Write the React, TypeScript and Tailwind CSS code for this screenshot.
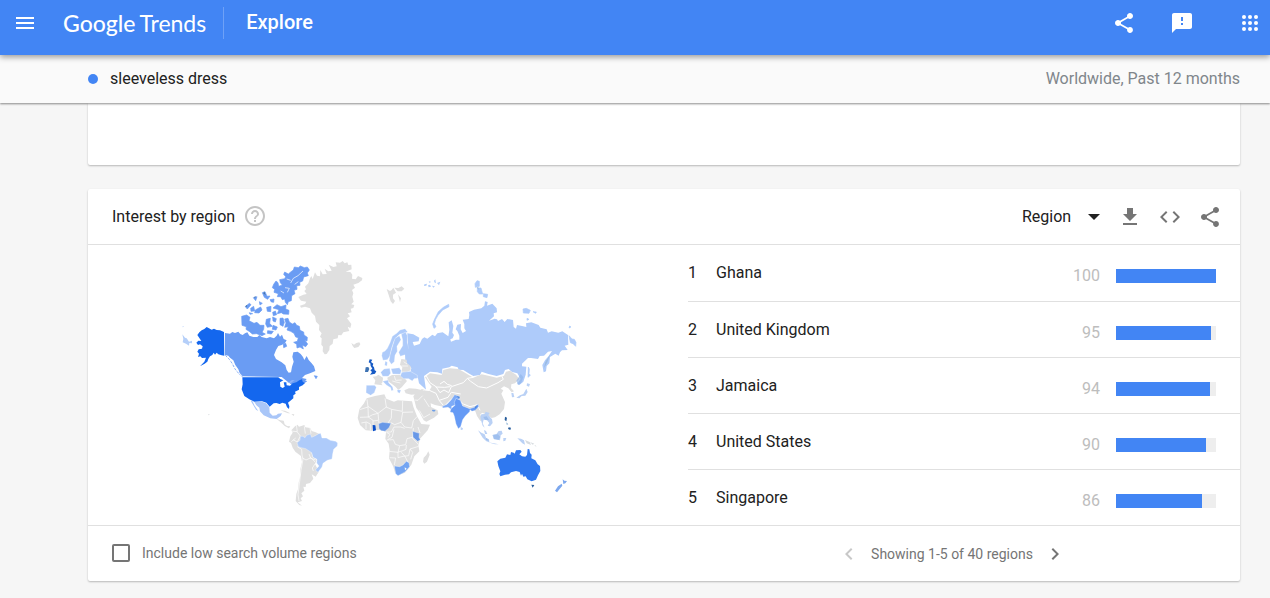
import type { ReactNode } from "react";
import {
  MdChevronLeft,
  MdChevronRight,
  MdCode,
  MdFeedback,
  MdHelpOutline,
  MdMenu,
  MdShare,
} from "react-icons/md";

const regions = [
  { name: "Ghana", value: 100 },
  { name: "United Kingdom", value: 95 },
  { name: "Jamaica", value: 94 },
  { name: "United States", value: 90 },
  { name: "Singapore", value: 86 },
];

function IconButton({
  label,
  disabled,
  children,
}: {
  label: string;
  disabled?: boolean;
  children: ReactNode;
}) {
  return (
    <button type="button" aria-label={label} disabled={disabled} className="block size-6 shrink-0">
      {children}
    </button>
  );
}

const appDots = [6, 12, 18];

function AppsIcon() {
  return (
    <svg viewBox="0 0 24 24" className="size-6" fill="currentColor" aria-hidden="true">
      {appDots.map((y) => appDots.map((x) => <circle key={`${x}-${y}`} cx={x} cy={y} r="2" />))}
    </svg>
  );
}

function DownloadIcon() {
  return (
    <svg viewBox="0 0 24 24" className="size-6" fill="currentColor" aria-hidden="true">
      <path d="M19 9h-4V3H9v6H5l7 7 7-7zM5 18v2h14v-2H5z" />
    </svg>
  );
}

function WorldMap() {
  return (
    <svg viewBox="0 0 1200 756" className="w-full max-w-[400px]" role="img" aria-label="Interest by region map">
      {/* Alaska, Canada and the Arctic islands */}
      <g transform="translate(-30 0)">
        <path fill="#1467ee" d="M162 231L163 302 155 301 145 298 140 293 135 299 131 293 127 300 120 304 115 312 112 320 104 326 90 334 103 320 108 308 96 309 91 304 84 306 87 296 82 290 86 283 96 281 98 274 90 268 84 270 79 263 85 257 94 258 88 249 82 240 88 232 95 226 103 222 110 216 117 220 125 224 132 221 140 225 150 226Z" />
        <path fill="#b5cff9" d="M37 238L45 248 50 250 57 260 66 257 66 265 58 264 57 272 48 266 38 262 40 252Z" />
        <path fill="#6a9cf3" d="M165 234L180 236 187 231 195 234 205 230 211 237 218 240 225 235 232 232 238 242 250 246 262 246 268 240 275 246 290 250 300 246 312 250 320 242 324 234 330 245 336 239 341 252 350 256 345 264 335 270 325 273 318 285 312 300 318 312 335 322 346 331 350 345 356 353 363 352 366 335 371 320 367 305 370 292 383 290 392 297 399 306 403 315 410 303 416 315 425 325 432 334 436 348 420 355 405 360 396 369 410 372 402 382 390 380 380 389 365 389 350 378 335 366 218 364 209 354 205 343 196 330 190 316 180 308 175 302 165 300Z" />
        <path stroke="#8cb2f6" strokeWidth="3" fill="none" strokeDasharray="8 4" d="M166 301L178 313 187 326 195 342 210 360" />
        <g fill="#6a9cf3" stroke="#6a9cf3" strokeWidth="2">
          <path d="M370 45L373 36 385 38 391 33 403 38 412 36 418 45 412 54 415 62 401 66 398 78 389 82 390 91 380 92 381 103 372 106 375 116 365 122 364 137 355 140 352 149 346 142 344 132 337 134 332 125 322 125 325 116 312 112 314 103 307 98 311 88 318 78 324 83 326 94 337 90 331 83 329 74 344 71 347 65 341 58 344 51 355 57 362 51Z" />
          <path d="M321 149L333 155 348 150 347 162 357 166 356 178 340 177 334 173 322 176 327 164 309 159Z" />
          <path d="M215 184L230 180 240 187 237 197 252 205 261 202 270 211 282 211 281 223 276 232 286 237 276 242 260 236 247 237 239 230 228 223 229 215 216 211Z" />
          <path d="M289 193L301 190 299 205 307 214 292 217 287 207ZM308 186L319 191 316 201 309 198ZM330 190L339 189 343 202 339 214 330 209ZM309 211L322 216 318 225 307 223ZM293 227L310 229 304 237 292 235Z" />
          <path d="M344 192L354 190 358 201 367 207 375 203 380 211 388 214 390 226 401 231 402 240 412 247 411 258 404 255 413 267 407 275 397 270 400 282 390 276 381 279 380 268 371 262 382 259 385 248 377 246 372 235 362 229 351 225 355 215 344 217 348 204Z" />
          <path d="M340 267L347 265 350 274 341 278ZM226 155L238 145 243 149 232 162ZM242 160L251 154 254 168 243 169ZM256 165L272 156 276 165 267 174 254 173ZM290 157L303 154 302 170 292 169ZM250 128L261 125 257 137ZM277 113L285 110 291 124 300 123 293 133 283 127ZM300 134L312 132 311 142 304 141ZM268 140L277 145 270 150ZM238 173L248 176 240 178ZM308 172L316 168 320 179 310 182ZM433 362L442 364 438 371ZM397 376L410 379 402 384Z" />
        </g>
        <path fill="none" stroke="#fff" strokeWidth="2" d="M399 48L384 62 370 70 362 84 M350 72L362 76 M345 98L358 100 352 112 M332 108L342 114 M385 80L374 88" />
        <path fill="#4876a8" d="M279 114L284 111 287 121ZM225 154L232 149 230 156ZM252 126L258 124 255 130Z" />
        <path fill="#b5cff9" d="M38 213L42 215 38 217Z" />
      </g>

      {/* Greenland, Iceland, Svalbard and Scandinavia */}
      <g transform="translate(330 0)">
        <path fill="#dfdfdf" d="M25 126L40 119 50 117 43 108 48 103 45 95 55 85 60 70 64 63 68 72 75 52 81 62 90 64 91 45 98 58 110 57 104 41 115 49 125 47 116 29 130 36 140 34 137 22 150 23 158 18 164 25 172 22 175 30 184 29 185 43 167 50 181 51 187 59 186 71 197 73 204 63 217 69 216 76 205 84 190 89 195 98 186 105 190 115 187 125 191 140 184 148 193 150 190 159 182 161 185 172 173 175 180 184 171 190 184 207 181 219 173 215 178 228 160 232 154 241 145 240 143 250 130 253 128 266 119 273 118 285 110 297 104 298 98 289 99 275 94 269 95 250 90 245 95 235 87 225 88 210 78 200 75 183 65 173 60 160 45 155 33 158 30 152 45 147 49 140 33 137Z" />
        <path fill="#dfdfdf" d="M184 264L192 269 199 264 208 262 211 268 205 276 193 279 188 273ZM290 102L300 108 305 105 310 98 318 113 309 119 309 130 315 138 309 147 302 139 296 120ZM313 98L325 99 335 94 343 101 335 109 323 109ZM324 118L333 130 330 142Z" />
        <g fill="#aecbfa" stroke="#fff" strokeWidth="1">
          <path d="M275 302L277 292 285 288 292 280 300 263 307 244 320 235 330 225 345 221 353 231 341 236 330 237 320 246 312 259 305 280 300 303 292 314 279 316Z" />
          <path d="M304 328L297 317 300 300 306 278 315 250 328 242 333 254 321 274 322 289 315 301 313 320Z" />
          <path d="M334 238L347 231 352 242 352 261 357 283 350 298 331 304 326 292 338 272 338 256Z" />
          <path d="M286 318L292 322 291 333 284 331Z" />
        </g>
        <path fill="#b5cff9" d="M403 88L411 86 409 92 402 93ZM416 79L423 80 419 84ZM414 91L420 89 423 95 416 97ZM432 77L436 73 438 85 433 82ZM441 84L451 80 447 91ZM426 92L435 94 430 98Z" />
      </g>

      {/* Russia */}
      <g transform="translate(750 45)" fill="#aecbfa">
        <path d="M-68 190L-50 193 -32 203 -34 214 -52 216 -48 227 -31 222 -24 207 -17 202 -8 206 7 194 15 199 22 190 38 187 55 199 58 180 56 157 65 151 70 168 67 188 72 195 68 205 61 208 63 215 78 209 88 209 88 197 82 183 77 178 82 164 93 162 92 178 98 189 108 183 103 175 103 162 98 149 116 147 118 135 117 126 132 119 154 115 163 107 165 94 173 96 171 107 187 101 200 115 201 127 191 130 192 139 177 152 194 146 201 148 204 153 216 147 224 156 232 147 249 150 251 171 258 176 261 165 276 168 289 171 288 160 304 157 326 165 331 173 350 178 354 188 365 184 385 188 397 184 414 195 415 224 404 227 413 240 396 241 390 247 386 257 376 251 360 261 358 280 350 288 348 304 341 307 337 285 345 271 356 258 366 243 354 245 342 257 329 258 324 267 303 264 294 264 276 281 276 289 289 290 287 314 280 335 268 345 262 341 272 327 262 310 246 306 236 297 225 300 220 312 200 318 175 312 155 305 150 315 130 318 118 311 100 300 86 299 83 292 65 287 58 292 37 296 36 311 22 307 0 305 -18 318 -15 340 -12 359 -33 340 -36 325 -60 312 -56 294 -74 276 -75 250 -65 237Z" />
        <path stroke="#aecbfa" strokeWidth="2" d="M8 162L14 147 25 125 40 112 56 103 57 110 38 120 24 136 17 148 13 161 18 170 12 175ZM135 41L141 32 148 34 148 49 136 52ZM142 54L153 54 158 72 148 72 142 65ZM160 71L173 73 171 83 160 80ZM279 117L289 115 301 121 297 130 280 129ZM309 125L319 126 317 130ZM291 145L297 148 291 151ZM417 197L426 207 433 208 438 217 437 229 429 221 421 218ZM419 168L423 171 417 174ZM295 291L298 297 297 311 301 316 294 322Z" />
        <path fill="#8eb0d2" d="M342 294L346 276 361 252 351 279ZM140 52L145 50 146 60Z" opacity=".6" />
      </g>

      {/* Asia and Oceania */}
      <g transform="translate(750 375)">
        <path fill="#dfdfdf" d="M-15 -8L0 -20 35 -15 40 -30 60 -35 85 -33 100 -25 130 -7 155 -17 175 -13 200 -7 222 -13 228 -25 240 -28 258 -16 268 -3 255 10 244 13 243 24 252 34 245 37 235 25 222 19 212 26 220 31 214 41 225 66 222 87 209 103 195 112 185 114 172 105 157 98 151 103 156 120 151 123 141 108 136 94 120 88 100 80 88 62 75 48 60 60 40 80 15 75 0 69 -15 60 -35 42 -25 27 -3 33 5 20 -5 7Z" />
        <g fill="none" stroke="#fff" strokeWidth="3">
          <path d="M-12 -14L0 8 18 20 30 38 42 30 56 38 64 20 100 8 112 -5 130 -8M112 -5L122 4 145 20 170 24 204 8 220 -2 214 -15M0 32L18 40 28 62 40 76M17 21L44 22 61 20M28 61L54 52 64 37 92 42M30 12L42 4 52 13 65 17M87 60L100 72 120 80 142 74 150 91M-34 43L-18 30 1 31" />
        </g>
        <g stroke="#fff" strokeWidth="1">
          <path fill="#7dabf7" d="M37 79L51 73 63 60 74 44 86 48 91 55 79 60 76 75 65 79 65 89 54 82 38 84Z" />
          <path fill="#659af5" d="M78 55L91 61 98 78 119 86 133 82 145 72 146 80 136 91 126 94 120 89 119 95 106 108 98 119 92 140 85 146 78 132 73 109 69 98 60 96 63 86 75 76 73 67Z" />
        </g>
        <path fill="#3b75c4" d="M80 48L90 50 87 56ZM134 81L141 75 138 86Z" opacity=".6" />
        <g fill="#bad1f5">
          <path d="M92 141L99 145 97 150 92 149ZM151 111L154 103 164 102 167 95 179 99 175 105 186 118 188 129 180 139 173 137 178 129 171 121 161 119 158 130 164 143 158 137 153 121ZM144 151L154 158 164 163 168 173 177 178 178 187 169 184 158 173ZM162 150L168 153 172 162 165 162ZM187 165L199 163 206 153 215 152 218 161 212 166 210 181 192 178ZM174 187L191 190 206 193 195 193ZM220 174L229 174 226 182 220 184ZM262 175L273 176 282 181 285 194 277 190ZM244 39L250 39 253 51 246 52ZM291 10L300 12 297 20 290 17ZM289 26L293 36 286 47 275 48 268 55 259 53 270 46 280 42Z" />
        </g>
        <path fill="#91b6e9" d="M190 164L204 163 211 171 206 179 191 176ZM259 2L272 -18 280 -8 273 10 264 15ZM160 111L170 109 177 120 165 119ZM169 173L177 184 168 179Z" opacity=".65" />
        <path fill="#d7dce0" d="M285 180L299 186 303 195 290 190ZM300 186L313 191 308 194ZM315 194L320 201 314 197Z" />
        <path fill="#285d9c" d="M225 110L231 113 229 124 224 120ZM236 142L243 143 241 150 234 147ZM304 314L313 315 308 323Z" />
        <path fill="#80aacf" d="M229 127L235 133 230 134Z" />
        <path fill="#2f78ef" d="M202 244L211 236 226 233 231 223 241 225 243 216 251 218 254 221 258 211 271 210 275 215 268 223 276 229 286 230 291 225 293 207 298 208 300 219 305 224 304 235 316 241 323 253 330 258 331 273 324 286 318 299 305 304 292 298 287 289 280 290 276 281 273 287 269 276 258 273 243 277 237 283 225 284 211 289 208 282 211 274 205 258Z" />
        <path fill="#7da8ee" d="M398 298L403 302 411 303 406 310 400 312ZM375 332L384 319 395 311 397 317 389 327 381 337Z" />
      </g>

      {/* United States, Mexico and South America */}
      <g transform="translate(150 345)">
        <path fill="#1467ee" d="M37 22L145 22 151 27 160 31 150 37 151 50 158 54 164 50 161 37 169 37 170 46 180 47 188 40 199 37 208 31 216 28 218 35 225 39 218 46 207 51 207 59 195 65 197 71 190 76 190 85 174 98 178 109 177 117 171 112 167 101 157 98 149 102 139 99 131 100 119 110 109 98 96 94 73 95 58 88 43 78 35 58 38 43Z" />
        <path fill="#8eb2f8" d="M28 12L39 20 37 22ZM169 35L178 36 186 30 194 31 181 40Z" />
        <path fill="#a9c6f8" d="M73 96L96 95 108 100 118 112 119 128 128 137 139 136 144 131 156 130 152 138 140 147 121 145 101 136 90 124 88 113 79 106ZM62 92L67 92 74 107 85 123 78 119Z" />
        <path fill="#dfdfdf" d="M139 146L151 151 161 152 164 163 171 168 181 169 177 175 164 168 154 158ZM151 121L165 122 181 130 174 130ZM184 132L193 133 191 138ZM181 199L188 188 184 181 195 169 202 164 207 170 223 165 226 172 241 174 245 183 255 186 267 191 257 205 237 210 223 228 244 245 248 262 260 269 255 282 263 298 266 306 257 320 245 313 250 326 240 339 228 342 227 351 220 350 223 362 214 370 219 379 212 385 216 393 203 397 216 407 208 405 197 393 199 372 204 358 206 338 211 317 211 298 216 276 213 258 196 245 188 233 183 219 177 215Z" />
        <path fill="none" stroke="#fff" strokeWidth="2" d="M183 183L201 185 211 198 202 216 189 209M199 165L202 185M223 169L226 191M240 174L243 191M184 215L197 204M202 230L215 238 216 255 219 267 213 301 208 342 204 374 207 393M218 264L228 270 243 263 255 276M237 252L242 265 257 270M255 282L247 294 250 303" />
        <path fill="#aecbfa" stroke="#fff" strokeWidth="1" d="M201 218L210 211 211 199 219 199 225 203 230 196 241 192 245 202 256 197 266 191 272 190 276 204 289 204 301 211 317 214 323 219 322 228 311 238 308 252 306 267 292 271 279 280 276 291 264 307 256 300 267 288 260 279 261 268 249 262 245 248 227 236 214 233 205 230Z" />
      </g>

      {/* Europe, Africa and the Middle East */}
      <g transform="translate(510 285)">
        <path fill="#dfdfdf" d="M163 121L177 115 198 116 225 122 226 130 202 133 184 134 167 130ZM190 139L198 129 223 132 231 145 242 158 243 171 263 181 265 192 252 203 229 215 221 211 208 186 199 174ZM68 80L79 79 85 74 99 83 98 96 94 101 98 106 73 103 76 91ZM154 27L170 29 171 39 182 49 182 61 171 66 155 65 157 52 150 44ZM112 83L126 75 155 75 171 93 155 112 145 120 137 111 127 103 114 94Z" />
        <path fill="#dfdfdf" d="M50 145L75 138 103 133 109 146 132 155 143 151 186 154 190 170 201 199 214 222 240 224 233 241 210 266 205 285 208 304 193 319 184 344 165 368 145 376 135 368 130 350 117 325 119 301 116 281 106 267 108 246 100 242 86 239 65 242 47 241 30 225 23 204 28 178 41 161Z" />
        <g fill="none" stroke="#fff" strokeWidth="2">
          <path d="M51 148L54 171 29 179M54 169L84 190 109 171 105 145M30 202L55 201 54 171M55 201L68 194 84 190 87 220M108 171L125 178 124 204 114 219M125 178L157 184 158 153M157 187L189 186M158 187L153 217 134 224 123 218M153 217L164 231 185 234 190 212 202 199M34 219L49 216 61 222 61 241M48 217L48 238M55 201L69 211 69 225M69 213L84 211M107 246L124 246 132 231 152 231 164 235M132 238L126 262 113 269M110 270L130 269 136 283 149 287 167 284 171 266 187 262M190 234L188 265 204 282M118 304L144 307 149 287M144 306L156 303 168 298 169 285M144 306L144 323 159 319 176 317 180 297 206 289M119 323L137 324 133 345M154 307L165 319 174 337M204 231L210 249M180 297L188 307 182 328M111 248L120 253 114 263" />
          <path d="M194 150L204 151 218 137M208 181L221 203 240 192M222 146L238 171M133 78L137 91 155 90M127 93L138 96 151 99M161 35L171 42M154 48L174 48" />
        </g>
        <path fill="#dfdfdf" d="M235 304L239 314 231 335 223 341 219 335 221 323 229 315Z" />
        <g stroke="#fff" strokeWidth="1">
          <path fill="#aecbfa" d="M92 67L102 57 119 55 122 70 115 79 98 79ZM123 56L148 53 154 62 151 73 128 72ZM155 67L181 64 202 76 202 85 192 86 187 93 176 86 161 86 151 78ZM49 106L74 106 79 112 73 128 62 136 48 128ZM98 94L115 90 116 98 128 111 130 121 124 122 122 113 110 106ZM141 119L153 120 149 130 143 127Z" />
          <path fill="#6898e7" d="M86 221L98 217 123 220 117 233 105 244 94 242 87 236ZM188 244L208 250 207 262 211 269 203 274 189 262Z" />
          <path fill="#74a5f2" d="M133 348L149 350 159 345 169 334 177 338 179 350 165 366 144 377 137 371Z" />
        </g>
        <path fill="#fff" d="M164 352L170 356 165 361Z" />
        <path fill="#084eca" d="M68 225L76 226 78 241 69 244Z" />
        <path fill="#165ac5" d="M59 28L67 29 63 36 70 41 68 47 72 52 74 61 79 64 75 71 60 74 66 66 61 61 67 56 62 48 61 40 56 37Z" />
        <path fill="#3d72b3" d="M47 52L55 51 58 57 54 66 45 66Z" />
        <path fill="#6d9fe7" d="M247 179L257 180 253 185 246 183Z" />
      </g>
      <path fill="#c6ccd1" d="M85 477L89 479 86 481Z" />
    </svg>
  );
}

function RegionRow({ rank, name, value }: { rank: number; name: string; value: number }) {
  return (
    <li className="flex h-14 items-center border-[#e0e0e0] pr-6 not-first:border-t">
      <span className="w-7">{rank}</span>
      <span className="flex-1">{name}</span>
      <span className="flex items-center gap-4 pt-1.5">
        <span className="text-[#bdbdbd]">{value}</span>
        <span className="block h-3.5 w-[100px] bg-[#eeeeee]">
          <span className="block h-full bg-[#4285f4]" style={{ width: `${value}%` }} />
        </span>
      </span>
    </li>
  );
}

export default function App() {
  return (
    <div className="min-h-screen bg-[#f6f6f6] pb-4 font-[Roboto,sans-serif] text-base text-[#212121]">
      <header className="relative z-20 flex h-[55px] items-center bg-[#4285f4] pr-2 pb-[9px] pl-[13px] text-white shadow-[0_2px_6px_rgba(0,0,0,0.4)]">
        <IconButton label="Main menu">
          <MdMenu className="size-6" />
        </IconButton>
        <a href="#home" className="ml-[26px] flex items-baseline gap-1 font-[Lato,sans-serif] text-[23px] leading-8">
          <span className="font-medium">Google</span>
          <span>Trends</span>
        </a>
        <div className="ml-[17px] h-8 w-px bg-[#6ea1f7]" />
        <h1 className="ml-[22px] flex-1 pb-0.5 text-xl leading-6 font-medium">Explore</h1>
        <div className="flex items-center">
          <IconButton label="Share">
            <MdShare className="size-6" />
          </IconButton>
          <div className="ml-[34px] flex items-center gap-11">
            <IconButton label="Send feedback">
              <MdFeedback className="size-6" />
            </IconButton>
            <IconButton label="Google apps">
              <AppsIcon />
            </IconButton>
          </div>
        </div>
      </header>

      <div className="relative z-10 flex h-12 items-center justify-between bg-[#fafafa] pr-[30px] pl-[88px] shadow-[0_1px_2px_rgba(0,0,0,0.45)]">
        <div className="flex items-center gap-3">
          <span className="size-2.5 rounded-full bg-[#4285f4]" />
          <span>sleeveless dress</span>
        </div>
        <span className="text-[#80868b]">Worldwide, Past 12 months</span>
      </div>

      <main className="flex flex-col gap-6 pr-[30px] pl-[88px]">
        <section className="h-[62px] rounded-b-xs bg-white shadow-[0_1px_2px_rgba(0,0,0,0.25)]" />

        <section className="rounded-xs bg-white shadow-[0_1px_2px_rgba(0,0,0,0.25)]">
          <div className="flex h-14 items-center justify-between border-b border-[#e0e0e0] pr-[18px] pl-6">
            <div className="flex items-center gap-2">
              <h2>Interest by region</h2>
              <button type="button" aria-label="Help" className="pb-0.5 text-[#c4c4c4]">
                <MdHelpOutline className="size-6" />
              </button>
            </div>
            <div className="flex items-center gap-4 text-[#757575]">
              <div className="relative flex items-center text-[#212121]">
                <select aria-label="Resolution" className="w-20 appearance-none bg-transparent leading-6 outline-none">
                  <option>Region</option>
                  <option>City</option>
                </select>
                <svg viewBox="0 0 10 5" className="pointer-events-none absolute right-0.5 h-1.5 w-3" aria-hidden="true">
                  <path d="M0 0h10L5 5z" fill="currentColor" />
                </svg>
              </div>
              <IconButton label="Download">
                <DownloadIcon />
              </IconButton>
              <IconButton label="Embed">
                <MdCode className="size-6" />
              </IconButton>
              <IconButton label="Share this chart">
                <MdShare className="size-6" />
              </IconButton>
            </div>
          </div>

          <div className="grid grid-cols-[25fr_23fr]">
            <div className="flex items-start pt-2.5 pl-[92px]">
              <WorldMap />
            </div>
            <ol>
              {regions.map((region, index) => (
                <RegionRow key={region.name} rank={index + 1} name={region.name} value={region.value} />
              ))}
            </ol>
          </div>

          <div className="grid h-14 grid-cols-[25fr_23fr] items-center border-t border-[#e0e0e0] text-sm text-[#757575]">
            <label className="flex items-center gap-3 pb-0.5 pl-6">
              <input
                type="checkbox"
                className="size-[18px] appearance-none rounded-xs border-2 border-[#757575] checked:bg-[#4285f4]"
              />
              Include low search volume regions
            </label>
            <div className="flex items-center justify-center gap-2.5 pr-6">
              <span className="flex text-[#c8c8c8]">
                <IconButton label="Previous" disabled>
                  <MdChevronLeft className="size-6" />
                </IconButton>
              </span>
              <span>Showing 1-5 of 40 regions</span>
              <IconButton label="Next">
                <MdChevronRight className="size-6" />
              </IconButton>
            </div>
          </div>
        </section>
      </main>
    </div>
  );
}
